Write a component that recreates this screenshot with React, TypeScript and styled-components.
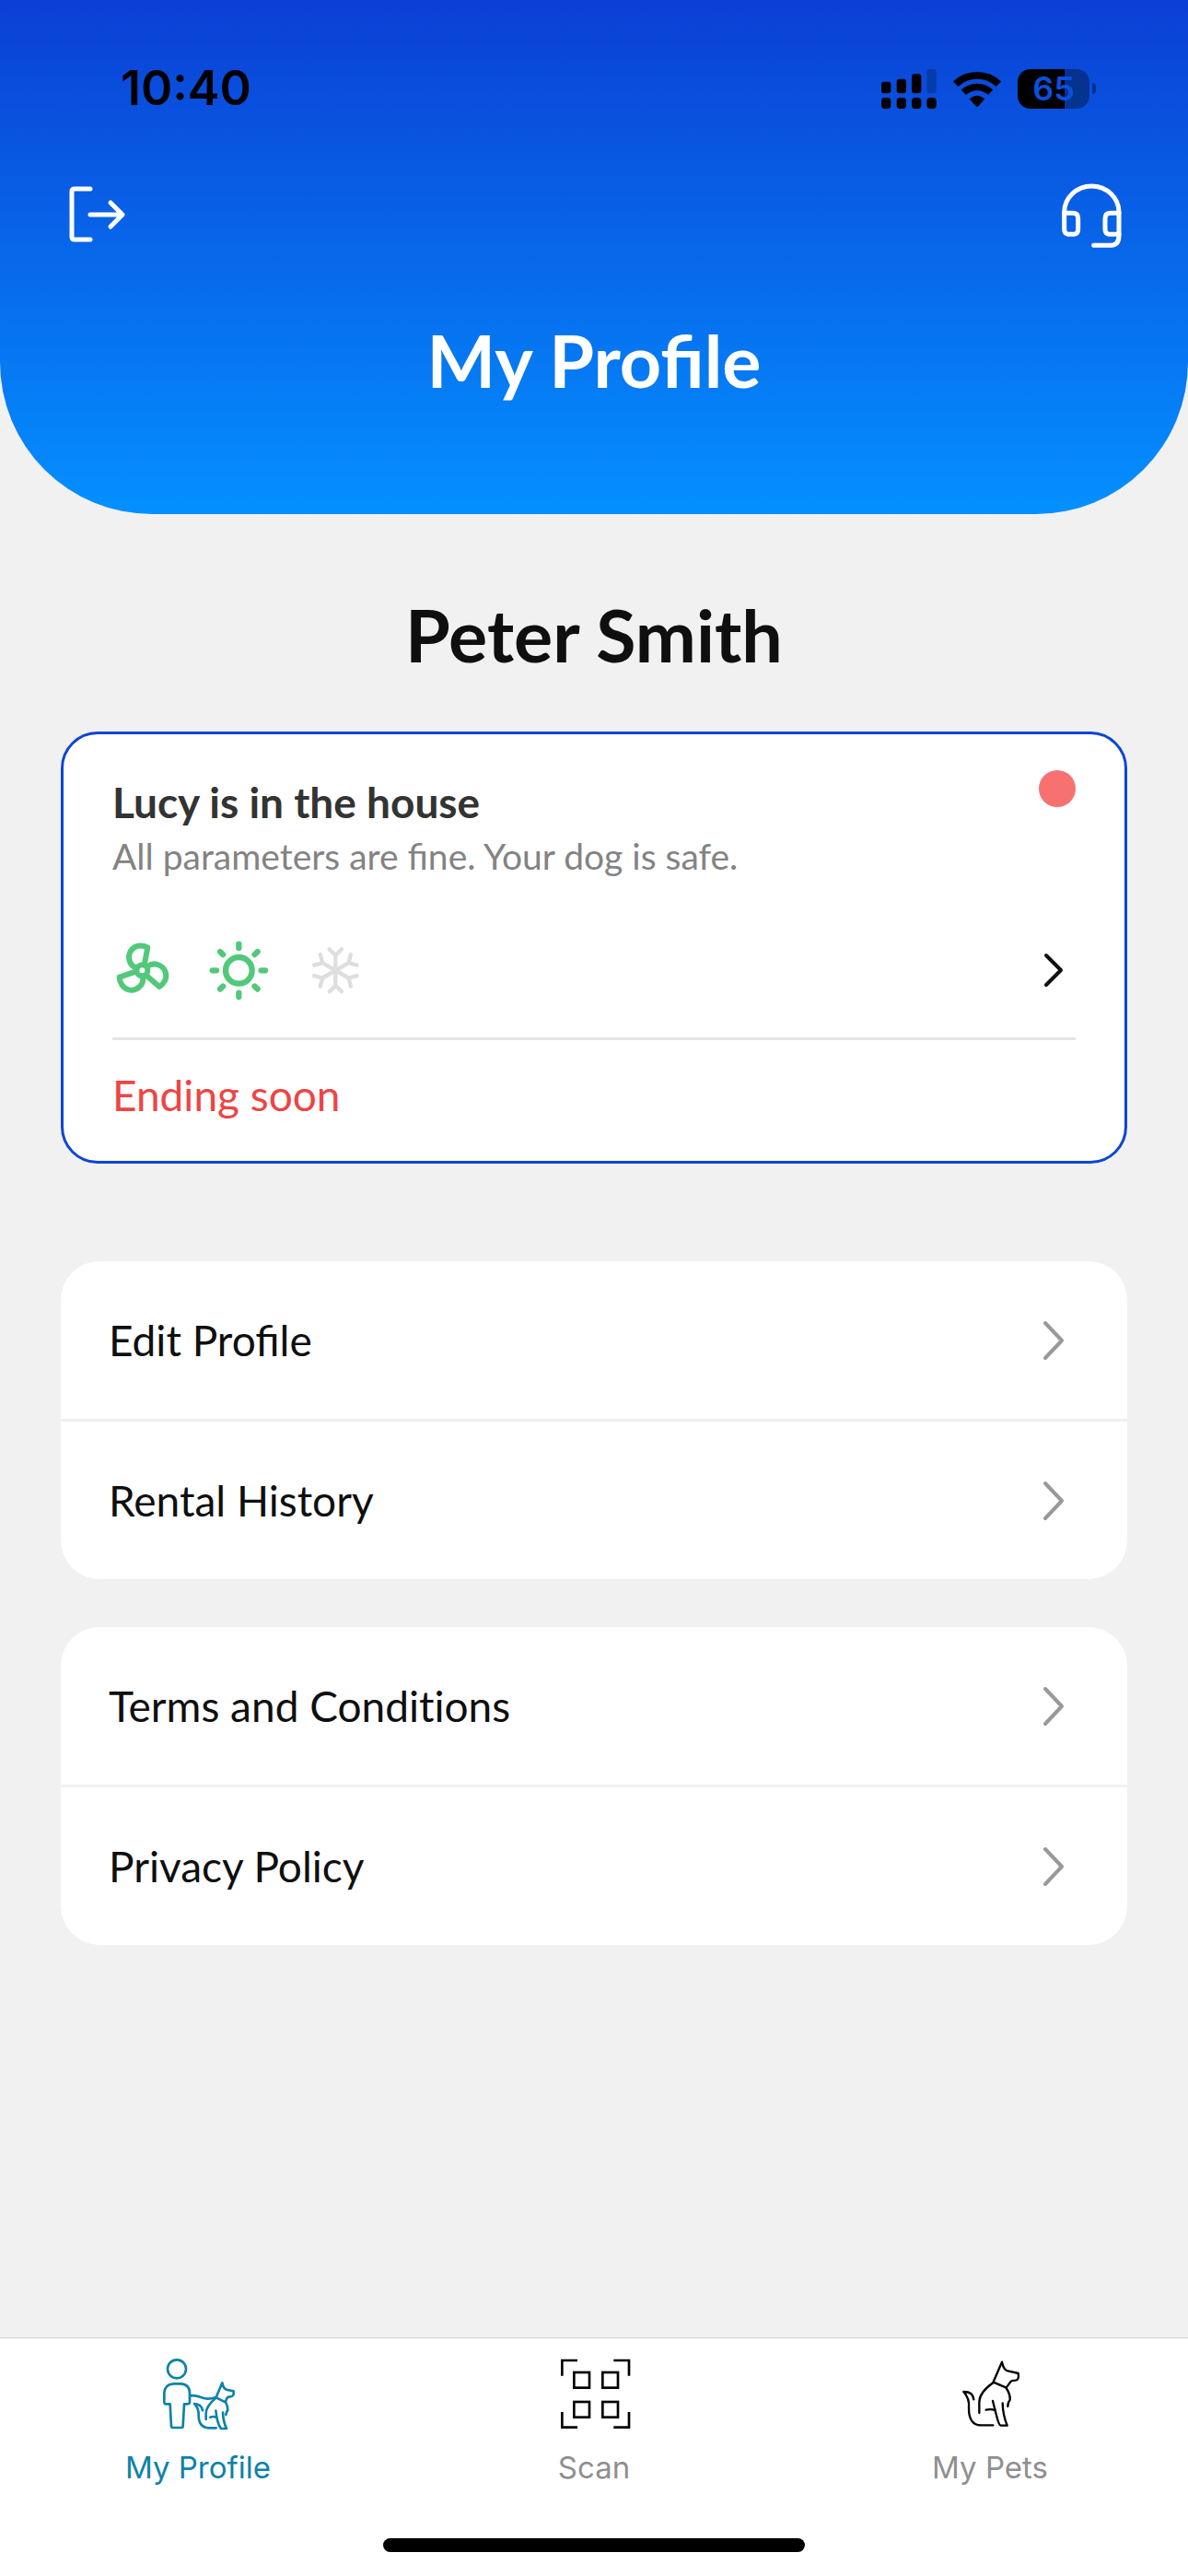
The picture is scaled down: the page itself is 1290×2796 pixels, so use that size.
import React from "react";
import styled, { createGlobalStyle } from "styled-components";

const GlobalStyle = createGlobalStyle`
  *, *::before, *::after { box-sizing: border-box; }
  body {
    margin: 0;
    background: #f1f1f1;
    font-family: Lato, "Open Sans", sans-serif;
    color: #0f0f0f;
  }
  h1, h2, h3, p, ul { margin: 0; padding: 0; }
  ul { list-style: none; }
  button { font: inherit; color: inherit; background: none; border: 0; padding: 0; cursor: pointer; }
  a { color: inherit; text-decoration: none; }
  svg { display: block; flex: none; }
`;

const Screen = styled.div`
  min-height: 100vh;
  display: flex;
  flex-direction: column;
`;

const Header = styled.header`
  background: linear-gradient(180deg, #0b3fd5 0%, #0490ff 100%);
  border-radius: 0 0 165px 165px;
  padding-bottom: 119px;
  color: #fff;
`;

const StatusBar = styled.div`
  display: flex;
  justify-content: space-between;
  align-items: center;
  height: 136px;
  padding: 56px 100px 0 131px;
  margin-bottom: 62px;
  color: #000;
  font-family: Inter, "Liberation Sans", sans-serif;
`;

const Clock = styled.time`
  font-size: 52px;
  line-height: 64px;
  font-weight: 600;
`;

const StatusIcons = styled.div`
  display: flex;
  align-items: center;
  gap: 18px;
`;

const Battery = styled.div`
  display: flex;
  align-items: center;
  gap: 3px;
`;

const BatteryBody = styled.div<{ $level: number }>`
  width: 78px;
  height: 43px;
  border-radius: 14px;
  background: linear-gradient(
    90deg,
    #000 ${(p) => p.$level}%,
    rgba(0, 0, 0, 0.35) ${(p) => p.$level}%
  );
  color: #0b50dc;
  font-size: 36px;
  line-height: 43px;
  font-weight: 600;
  text-align: center;
`;

const BatteryTip = styled.div`
  width: 4px;
  height: 12px;
  border-radius: 0 4px 4px 0;
  background: rgba(0, 0, 0, 0.35);
`;

const Actions = styled.div`
  display: flex;
  justify-content: space-between;
  padding: 0 69px;
  margin-bottom: 73px;
`;

const Title = styled.h1`
  font-size: 79px;
  line-height: 96px;
  font-weight: 700;
  text-align: center;
`;

const Main = styled.main`
  padding: 83px 66px 53px;
`;

const UserName = styled(Title).attrs({ as: "h2" })`
  margin-bottom: 57px;
`;

const RentalCard = styled.section`
  background: #fff;
  border: 3px solid #0d45d8;
  border-radius: 40px;
  padding: 39px 53px 43px;
  margin-bottom: 106px;
`;

const CardTop = styled.div`
  display: flex;
  justify-content: space-between;
  align-items: flex-start;
`;

const CardTexts = styled.div`
  display: flex;
  flex-direction: column;
  gap: 6px;
  padding-top: 7px;
`;

const CardTitle = styled.h3`
  font-size: 46px;
  line-height: 56px;
  font-weight: 700;
  color: #333;
`;

const CardNote = styled.p`
  font-size: 39px;
  line-height: 48px;
  color: #838383;
`;

const StatusDot = styled.span`
  width: 40px;
  height: 40px;
  border-radius: 50%;
  background: #f87171;
`;

const CardControls = styled.div`
  display: flex;
  justify-content: space-between;
  align-items: center;
  padding: 67px 0 40px;
  border-bottom: 3px solid #e5e5e5;
`;

const Climate = styled.div`
  display: flex;
  gap: 39px;
`;

const Warning = styled.p`
  padding-top: 32px;
  font-size: 46px;
  line-height: 56px;
  color: #ef4444;
`;

const Group = styled.ul`
  background: #fff;
  border-radius: 42px;
  overflow: hidden;

  & + & { margin-top: 52px; }
`;

const GroupItem = styled.li`
  & + & { border-top: 3px solid #f1f1f1; }
`;

const GroupLink = styled.a<{ $plainLetters?: boolean }>`
  display: flex;
  justify-content: space-between;
  align-items: center;
  padding: 58px 56px 57px 52px;
  font-size: 46px;
  line-height: 56px;
  font-variant-ligatures: ${(p) => (p.$plainLetters ? "no-common-ligatures" : "normal")};
`;

const TabBar = styled.nav`
  margin-top: auto;
  background: #fff;
  border-top: 1px solid #cfcfcf;
  padding: 21px 0 26px;
`;

const Tabs = styled.div`
  display: grid;
  grid-template-columns: repeat(3, 1fr);
  margin-bottom: 57px;
`;

const Tab = styled.a<{ $active?: boolean }>`
  display: flex;
  flex-direction: column;
  align-items: center;
  gap: 19px;
  font-family: Inter, "Liberation Sans", sans-serif;
  font-size: 33px;
  line-height: 40px;
  color: ${(p) => (p.$active ? "#0e82a9" : "#8f8f8f")};

  svg { color: ${(p) => (p.$active ? "#0e82a9" : "#000")}; }
`;

const HomeIndicator = styled.div`
  width: 458px;
  height: 15px;
  border-radius: 8px;
  margin: 0 auto;
  background: #000;
`;

const line = {
  fill: "none",
  stroke: "currentColor",
  strokeLinecap: "round" as const,
  strokeLinejoin: "round" as const,
  "aria-hidden": true,
};

const SignalIcon = () => (
  <svg width="60" height="43" viewBox="0 0 180 129" fill="#000" aria-hidden>
    <rect x="0" y="41" width="31" height="38" rx="9" />
    <rect x="50" y="32" width="31" height="47" rx="9" />
    <rect x="99" y="16" width="31" height="63" rx="9" />
    <rect x="148" y="0" width="31" height="79" rx="9" opacity="0.22" />
    <rect x="0" y="93" width="31" height="36" rx="11" />
    <rect x="50" y="93" width="31" height="36" rx="11" />
    <rect x="99" y="93" width="31" height="36" rx="11" />
    <rect x="148" y="93" width="31" height="36" rx="11" />
  </svg>
);

const WifiIcon = () => (
  <svg width="52" height="39" viewBox="0 0 156 117" aria-hidden>
    <g fill="none" stroke="#000" strokeWidth="23">
      <path d="M8 43A101 101 0 0 1 148 43" />
      <path d="M34 70A64 64 0 0 1 122 70" />
    </g>
    <path d="M53 91Q78 69 103 91L82 115Q78 119 74 115Z" fill="#000" />
  </svg>
);

const LogoutIcon = () => (
  <svg width="72" height="72" viewBox="0 0 72 72" {...line} strokeWidth="5">
    <path d="M29 7H12Q9 7 9 10V59Q9 62 12 62H29" />
    <path d="M29 35H63M51 22L64 35L51 48" />
  </svg>
);

const HeadsetIcon = () => (
  <svg width="72" height="72" viewBox="746 477 216 216" {...line} strokeWidth="15">
    <path d="M766 578V574A89 85 0 0 1 944 574V650Q944 682 915 682H862" />
    <path d="M766 577H793Q811 577 811 594V629Q811 646 793 646H784Q766 646 766 629Z" />
    <path d="M944 577H917Q899 577 899 594V629Q899 646 917 646H944" />
  </svg>
);

const FanIcon = () => (
  <svg width="66" height="66" viewBox="0 0 198 198" {...line} stroke="#52c97a" strokeWidth="18">
    <circle cx="97" cy="100" r="18" />
    {[0, 120, 240].map((angle) => (
      <path
        key={angle}
        d="M77 92C51 80 48 48 64 31C77 17 98 16 115 25L104 82"
        transform={`rotate(${angle} 97 100)`}
      />
    ))}
  </svg>
);

const SunIcon = () => (
  <svg width="66" height="66" viewBox="0 0 198 198" {...line} stroke="#52c97a" strokeWidth="19">
    <circle cx="97" cy="100" r="43" />
    {[0, 45, 90, 135, 180, 225, 270, 315].map((angle) => (
      <path key={angle} d="M97 14V27" transform={`rotate(${angle} 97 100)`} />
    ))}
  </svg>
);

const SnowIcon = () => (
  <svg width="66" height="66" viewBox="0 0 198 198" {...line} stroke="#dedede" strokeWidth="13">
    {[0, 60, 120, 180, 240, 300].map((angle) => (
      <path key={angle} d="M97 100V51M77 31L97 51L117 31" transform={`rotate(${angle} 97 100)`} />
    ))}
  </svg>
);

const CardChevron = () => (
  <svg width="48" height="48" viewBox="0 0 48 48" {...line} strokeWidth="4">
    <path d="M16 8L32 24L16 40" />
  </svg>
);

const RowChevron = () => (
  <svg width="48" height="48" viewBox="0 0 48 48" {...line} stroke="#999" strokeWidth="4">
    <path d="M15 5L33 24L15 43" />
  </svg>
);

const OwnerIcon = () => (
  <svg width="80" height="80" viewBox="225 117 240 240" {...line} strokeWidth="8">
    <circle cx="276" cy="154" r="30" />
    <path d="M265 202H289Q318 204 318 233V262Q318 268 311 268H300L296 340Q296 345 291 345H263Q258 345 258 340L254 268H241Q235 268 235 261V233Q236 204 265 202Z" />
    <path d="M320 241C345 236 358 252 378 251Q390 251 401 247" />
    <path d="M404 246L424 199Q428 221 441 222L461 226Q463 244 450 244Q441 244 439 250L434 262L404 247" />
    <path d="M436 264Q443 278 442 288Q437 293 436 303" />
    <path d="M403 248Q371 275 371 298V318" />
    <path d="M360 289Q356 268 333 267Q348 281 347 305Q347 346 384 346H404" />
    <path d="M403 290Q408 335 420 348H438Q427 325 426 296" />
    <path d="M385 311Q395 307 403 311" />
  </svg>
);

const ScanIcon = () => (
  <svg width="80" height="80" viewBox="135 117 240 240" {...line} strokeLinecap="butt" strokeLinejoin="miter" strokeWidth="8">
    <path d="M151 176V126H201M319 126H369V176M151 294V344H201M369 294V344H319" />
    <rect x="190" y="165" width="50" height="50" />
    <rect x="283" y="165" width="50" height="50" />
    <rect x="190" y="261" width="50" height="50" />
    <rect x="283" y="261" width="50" height="50" />
  </svg>
);

const DogIcon = () => (
  <svg width="80" height="80" viewBox="165 117 240 240" {...line} strokeWidth="7">
    <path d="M296 196L324 131Q330 160 346 161L377 168Q381 190 368 191Q354 191 351 197L338 215L296 197" />
    <path d="M338 216Q352 238 350 255Q343 262 343 276" />
    <path d="M296 198Q250 230 250 262V297" />
    <path d="M232 253Q230 228 199 228Q219 250 216 280Q215 337 256 337H295" />
    <path d="M294 258L306 305Q314 337 320 338H341Q327 305 326 265" />
    <path d="M272 287Q287 283 302 288" />
  </svg>
);

const groups = [
  [{ label: "Edit Profile" }, { label: "Rental History" }],
  [{ label: "Terms and Conditions", plainLetters: true }, { label: "Privacy Policy" }],
];

const tabs = [
  { label: "My Profile", Icon: OwnerIcon, active: true },
  { label: "Scan", Icon: ScanIcon, active: false },
  { label: "My Pets", Icon: DogIcon, active: false },
];

export default function App() {
  return (
    <>
      <GlobalStyle />
      <Screen>
        <Header>
          <StatusBar>
            <Clock>10:40</Clock>
            <StatusIcons>
              <SignalIcon />
              <WifiIcon />
              <Battery>
                <BatteryBody $level={66}>65</BatteryBody>
                <BatteryTip />
              </Battery>
            </StatusIcons>
          </StatusBar>
          <Actions>
            <button type="button" aria-label="Log out">
              <LogoutIcon />
            </button>
            <button type="button" aria-label="Support">
              <HeadsetIcon />
            </button>
          </Actions>
          <Title>My Profile</Title>
        </Header>

        <Main>
          <UserName>Peter Smith</UserName>

          <RentalCard>
            <CardTop>
              <CardTexts>
                <CardTitle>Lucy is in the house</CardTitle>
                <CardNote>All parameters are fine. Your dog is safe.</CardNote>
              </CardTexts>
              <StatusDot />
            </CardTop>
            <CardControls>
              <Climate>
                <FanIcon />
                <SunIcon />
                <SnowIcon />
              </Climate>
              <button type="button" aria-label="Open rental">
                <CardChevron />
              </button>
            </CardControls>
            <Warning>Ending soon</Warning>
          </RentalCard>

          {groups.map((items) => (
            <Group key={items[0].label}>
              {items.map(({ label, plainLetters }) => (
                <GroupItem key={label}>
                  <GroupLink href="#" $plainLetters={plainLetters}>
                    {label}
                    <RowChevron />
                  </GroupLink>
                </GroupItem>
              ))}
            </Group>
          ))}
        </Main>

        <TabBar>
          <Tabs>
            {tabs.map(({ label, Icon, active }) => (
              <Tab key={label} href="#" $active={active} aria-current={active ? "page" : undefined}>
                <Icon />
                {label}
              </Tab>
            ))}
          </Tabs>
          <HomeIndicator />
        </TabBar>
      </Screen>
    </>
  );
}
